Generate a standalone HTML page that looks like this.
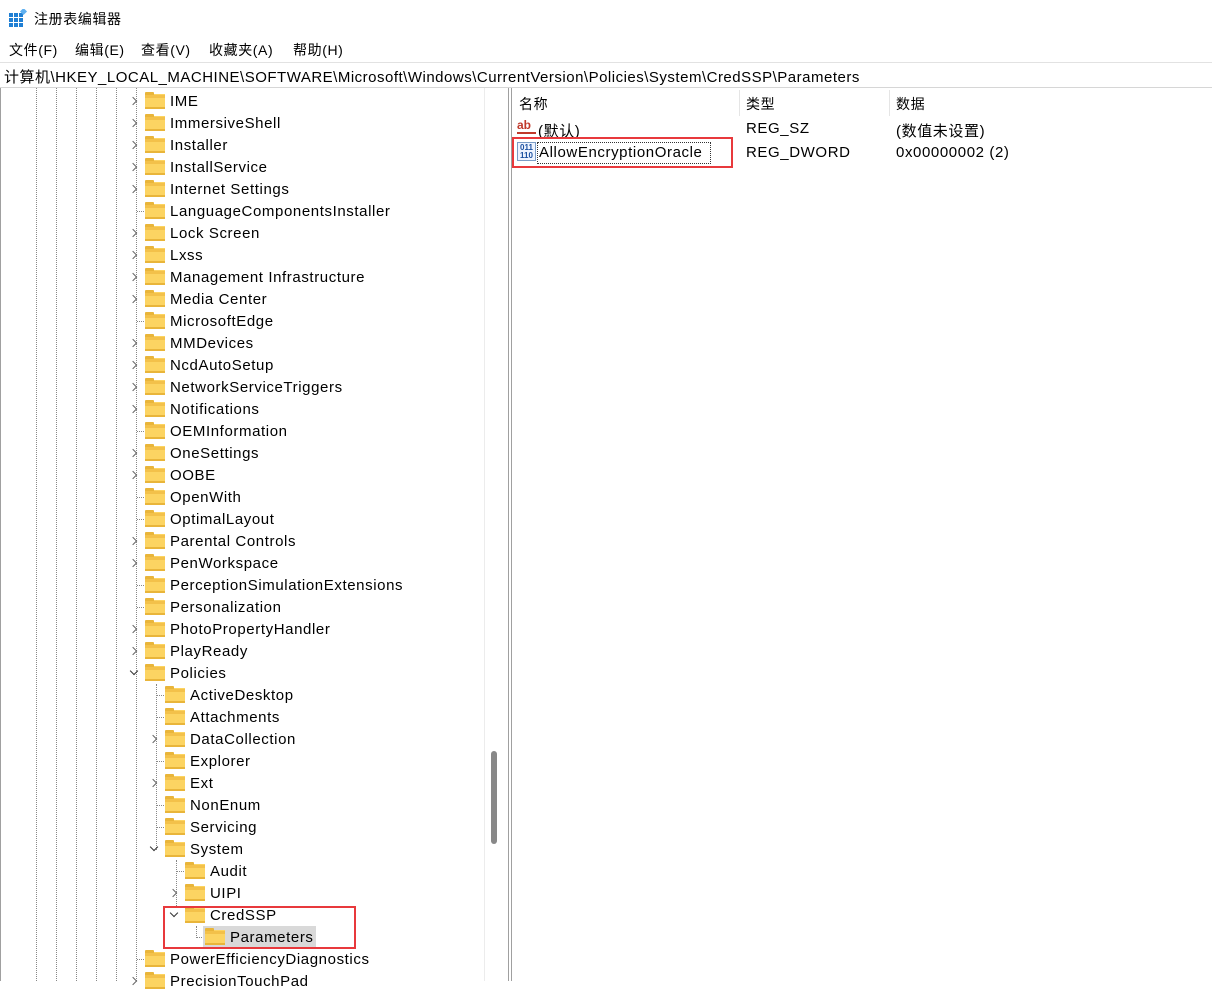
<!DOCTYPE html>
<html><head><meta charset="utf-8"><style>
*{margin:0;padding:0;box-sizing:border-box}
body{width:1212px;height:981px;background:#fff;position:relative;overflow:hidden;font-family:"Liberation Sans","Noto Sans CJK SC",sans-serif;color:#000;font-size:15px;letter-spacing:0.6px}
.a{position:absolute;white-space:nowrap}
.r{position:absolute;height:22px;line-height:22px;white-space:nowrap;font-size:15px}
.f{position:absolute;width:20px;height:15px;top:4px;background:#fcd462;border-bottom:2px solid #e9b53a}
.f:before{content:"";position:absolute;left:0;top:-2px;width:9px;height:3px;background:#e9b53a;border-radius:1px 1px 0 0}
.f:after{content:"";position:absolute;left:0;top:1px;width:20px;height:3px;background:#f3c14a}
.t{position:absolute;top:1px}
.gt{position:absolute;width:6px;height:6px;border-right:1.3px solid #666;border-bottom:1.3px solid #666;top:8px;transform:rotate(-45deg)}
.dn{position:absolute;width:6px;height:6px;border-right:1.3px solid #333;border-bottom:1.3px solid #333;top:6px;transform:rotate(45deg)}
.vl{position:absolute;width:0;border-left:1px dotted #888}
.hl{position:absolute;height:0;border-top:1px dotted #888;top:11px;width:9px}
.red{position:absolute;border:2px solid #e8393c}
</style></head><body>
<svg class="a" style="left:9px;top:9px" width="19" height="19" viewBox="0 0 19 19">
<rect x="0" y="4" width="4" height="4" fill="#1f7fd4"/><rect x="5" y="4" width="4" height="4" fill="#1f7fd4"/><rect x="10" y="4" width="4" height="4" fill="#1f7fd4"/>
<rect x="0" y="9" width="4" height="4" fill="#1f7fd4"/><rect x="5" y="9" width="4" height="4" fill="#1f7fd4"/><rect x="10" y="9" width="4" height="4" fill="#1f7fd4"/>
<rect x="0" y="14" width="4" height="4" fill="#1f7fd4"/><rect x="5" y="14" width="4" height="4" fill="#1f7fd4"/><rect x="10" y="14" width="4" height="4" fill="#1f7fd4"/>
<rect x="12" y="0" width="5" height="5" fill="#5fb0f0" transform="rotate(45 14.5 2.5)"/></svg>
<div class="a" style="left:34px;top:9px;font-size:14px">注册表编辑器</div>
<div class="a" style="left:9px;top:40px;font-size:14px">文件(F)</div>
<div class="a" style="left:75px;top:40px;font-size:14px">编辑(E)</div>
<div class="a" style="left:141px;top:40px;font-size:14px">查看(V)</div>
<div class="a" style="left:209px;top:40px;font-size:14px">收藏夹(A)</div>
<div class="a" style="left:293px;top:40px;font-size:14px">帮助(H)</div>
<div class="a" style="left:0;top:62px;width:1212px;height:1px;background:#e2e2e2"></div>
<div class="a" style="left:4px;top:66px;font-size:15px;letter-spacing:0.5px">计算机\HKEY_LOCAL_MACHINE\SOFTWARE\Microsoft\Windows\CurrentVersion\Policies\System\CredSSP\Parameters</div>
<div class="a" style="left:0;top:87px;width:1212px;height:1px;background:#d6d6d6"></div>
<div class="a" style="left:0;top:88px;width:1px;height:893px;background:#a0a0a0"></div>
<div class="a" style="left:484px;top:88px;width:1px;height:893px;background:#ececec"></div>
<div class="a" style="left:491px;top:751px;width:6px;height:93px;background:#888;border-radius:3px"></div>
<div class="a" style="left:508px;top:88px;width:1px;height:893px;background:#a0a0a0"></div>
<div class="a" style="left:511px;top:88px;width:1px;height:893px;background:#a0a0a0"></div>
<div class="vl" style="left:36px;top:88px;height:893px"></div>
<div class="vl" style="left:56px;top:88px;height:893px"></div>
<div class="vl" style="left:76px;top:88px;height:893px"></div>
<div class="vl" style="left:96px;top:88px;height:893px"></div>
<div class="vl" style="left:116px;top:88px;height:893px"></div>
<div class="vl" style="left:136px;top:88px;height:893px"></div>
<div class="vl" style="left:156px;top:684px;height:166px"></div>
<div class="vl" style="left:176px;top:860px;height:46px"></div>
<div class="vl" style="left:196px;top:926px;height:12px"></div>

<div class="r" style="top:90px;left:0;width:480px"><div class="gt" style="left:130px"></div><div class="f" style="left:145px"></div><span class="t" style="left:170px">IME</span></div>
<div class="r" style="top:112px;left:0;width:480px"><div class="gt" style="left:130px"></div><div class="f" style="left:145px"></div><span class="t" style="left:170px">ImmersiveShell</span></div>
<div class="r" style="top:134px;left:0;width:480px"><div class="gt" style="left:130px"></div><div class="f" style="left:145px"></div><span class="t" style="left:170px">Installer</span></div>
<div class="r" style="top:156px;left:0;width:480px"><div class="gt" style="left:130px"></div><div class="f" style="left:145px"></div><span class="t" style="left:170px">InstallService</span></div>
<div class="r" style="top:178px;left:0;width:480px"><div class="gt" style="left:130px"></div><div class="f" style="left:145px"></div><span class="t" style="left:170px">Internet Settings</span></div>
<div class="r" style="top:200px;left:0;width:480px"><div class="hl" style="left:137px"></div><div class="f" style="left:145px"></div><span class="t" style="left:170px">LanguageComponentsInstaller</span></div>
<div class="r" style="top:222px;left:0;width:480px"><div class="gt" style="left:130px"></div><div class="f" style="left:145px"></div><span class="t" style="left:170px">Lock Screen</span></div>
<div class="r" style="top:244px;left:0;width:480px"><div class="gt" style="left:130px"></div><div class="f" style="left:145px"></div><span class="t" style="left:170px">Lxss</span></div>
<div class="r" style="top:266px;left:0;width:480px"><div class="gt" style="left:130px"></div><div class="f" style="left:145px"></div><span class="t" style="left:170px">Management Infrastructure</span></div>
<div class="r" style="top:288px;left:0;width:480px"><div class="gt" style="left:130px"></div><div class="f" style="left:145px"></div><span class="t" style="left:170px">Media Center</span></div>
<div class="r" style="top:310px;left:0;width:480px"><div class="hl" style="left:137px"></div><div class="f" style="left:145px"></div><span class="t" style="left:170px">MicrosoftEdge</span></div>
<div class="r" style="top:332px;left:0;width:480px"><div class="gt" style="left:130px"></div><div class="f" style="left:145px"></div><span class="t" style="left:170px">MMDevices</span></div>
<div class="r" style="top:354px;left:0;width:480px"><div class="gt" style="left:130px"></div><div class="f" style="left:145px"></div><span class="t" style="left:170px">NcdAutoSetup</span></div>
<div class="r" style="top:376px;left:0;width:480px"><div class="gt" style="left:130px"></div><div class="f" style="left:145px"></div><span class="t" style="left:170px">NetworkServiceTriggers</span></div>
<div class="r" style="top:398px;left:0;width:480px"><div class="gt" style="left:130px"></div><div class="f" style="left:145px"></div><span class="t" style="left:170px">Notifications</span></div>
<div class="r" style="top:420px;left:0;width:480px"><div class="hl" style="left:137px"></div><div class="f" style="left:145px"></div><span class="t" style="left:170px">OEMInformation</span></div>
<div class="r" style="top:442px;left:0;width:480px"><div class="gt" style="left:130px"></div><div class="f" style="left:145px"></div><span class="t" style="left:170px">OneSettings</span></div>
<div class="r" style="top:464px;left:0;width:480px"><div class="gt" style="left:130px"></div><div class="f" style="left:145px"></div><span class="t" style="left:170px">OOBE</span></div>
<div class="r" style="top:486px;left:0;width:480px"><div class="hl" style="left:137px"></div><div class="f" style="left:145px"></div><span class="t" style="left:170px">OpenWith</span></div>
<div class="r" style="top:508px;left:0;width:480px"><div class="hl" style="left:137px"></div><div class="f" style="left:145px"></div><span class="t" style="left:170px">OptimalLayout</span></div>
<div class="r" style="top:530px;left:0;width:480px"><div class="gt" style="left:130px"></div><div class="f" style="left:145px"></div><span class="t" style="left:170px">Parental Controls</span></div>
<div class="r" style="top:552px;left:0;width:480px"><div class="gt" style="left:130px"></div><div class="f" style="left:145px"></div><span class="t" style="left:170px">PenWorkspace</span></div>
<div class="r" style="top:574px;left:0;width:480px"><div class="hl" style="left:137px"></div><div class="f" style="left:145px"></div><span class="t" style="left:170px">PerceptionSimulationExtensions</span></div>
<div class="r" style="top:596px;left:0;width:480px"><div class="hl" style="left:137px"></div><div class="f" style="left:145px"></div><span class="t" style="left:170px">Personalization</span></div>
<div class="r" style="top:618px;left:0;width:480px"><div class="gt" style="left:130px"></div><div class="f" style="left:145px"></div><span class="t" style="left:170px">PhotoPropertyHandler</span></div>
<div class="r" style="top:640px;left:0;width:480px"><div class="gt" style="left:130px"></div><div class="f" style="left:145px"></div><span class="t" style="left:170px">PlayReady</span></div>
<div class="r" style="top:662px;left:0;width:480px"><div class="dn" style="left:131px"></div><div class="f" style="left:145px"></div><span class="t" style="left:170px">Policies</span></div>
<div class="r" style="top:684px;left:0;width:480px"><div class="hl" style="left:157px"></div><div class="f" style="left:165px"></div><span class="t" style="left:190px">ActiveDesktop</span></div>
<div class="r" style="top:706px;left:0;width:480px"><div class="hl" style="left:157px"></div><div class="f" style="left:165px"></div><span class="t" style="left:190px">Attachments</span></div>
<div class="r" style="top:728px;left:0;width:480px"><div class="gt" style="left:150px"></div><div class="f" style="left:165px"></div><span class="t" style="left:190px">DataCollection</span></div>
<div class="r" style="top:750px;left:0;width:480px"><div class="hl" style="left:157px"></div><div class="f" style="left:165px"></div><span class="t" style="left:190px">Explorer</span></div>
<div class="r" style="top:772px;left:0;width:480px"><div class="gt" style="left:150px"></div><div class="f" style="left:165px"></div><span class="t" style="left:190px">Ext</span></div>
<div class="r" style="top:794px;left:0;width:480px"><div class="hl" style="left:157px"></div><div class="f" style="left:165px"></div><span class="t" style="left:190px">NonEnum</span></div>
<div class="r" style="top:816px;left:0;width:480px"><div class="hl" style="left:157px"></div><div class="f" style="left:165px"></div><span class="t" style="left:190px">Servicing</span></div>
<div class="r" style="top:838px;left:0;width:480px"><div class="dn" style="left:151px"></div><div class="f" style="left:165px"></div><span class="t" style="left:190px">System</span></div>
<div class="r" style="top:860px;left:0;width:480px"><div class="hl" style="left:177px"></div><div class="f" style="left:185px"></div><span class="t" style="left:210px">Audit</span></div>
<div class="r" style="top:882px;left:0;width:480px"><div class="gt" style="left:170px"></div><div class="f" style="left:185px"></div><span class="t" style="left:210px">UIPI</span></div>
<div class="r" style="top:904px;left:0;width:480px"><div class="dn" style="left:171px"></div><div class="f" style="left:185px"></div><span class="t" style="left:210px">CredSSP</span></div>
<div class="r" style="top:926px;left:0;width:480px"><div class="hl" style="left:197px"></div><div class="a" style="left:203px;top:0;width:113px;height:22px;background:#d9d9d9"></div><div class="f" style="left:205px"></div><span class="t" style="left:230px">Parameters</span></div>
<div class="r" style="top:948px;left:0;width:480px"><div class="hl" style="left:137px"></div><div class="f" style="left:145px"></div><span class="t" style="left:170px">PowerEfficiencyDiagnostics</span></div>
<div class="r" style="top:970px;left:0;width:480px"><div class="gt" style="left:130px"></div><div class="f" style="left:145px"></div><span class="t" style="left:170px">PrecisionTouchPad</span></div>
<div class="red" style="left:163px;top:906px;width:193px;height:43px"></div>
<div class="a" style="left:519px;top:94px;font-size:14px">名称</div>
<div class="a" style="left:746px;top:94px;font-size:14px">类型</div>
<div class="a" style="left:896px;top:94px;font-size:14px">数据</div>
<div class="a" style="left:739px;top:90px;width:1px;height:26px;background:#e5e5e5"></div>
<div class="a" style="left:889px;top:90px;width:1px;height:26px;background:#e5e5e5"></div>
<div class="a" style="left:517px;top:118px;width:19px;height:16px;color:#c0392b;font-weight:bold;font-size:12px;line-height:14px;letter-spacing:0;border-bottom:2px solid #c0392b">ab</div>
<div class="a" style="left:538px;top:120px;font-size:15px">(默认)</div>
<div class="a" style="left:746px;top:120px;font-size:15px">REG_SZ</div>
<div class="a" style="left:896px;top:120px;font-size:15px">(数值未设置)</div>
<div class="a" style="left:517px;top:142px;width:19px;height:19px;border:1px solid #7a9cc6;background:#eef4ff;font-size:8px;line-height:8px;letter-spacing:0;color:#1a4fa0;font-weight:bold;text-align:center;padding-top:1px">011<br>110</div>
<div class="a" style="left:537px;top:142px;width:174px;height:22px;border:1px dotted #333"></div>
<div class="a" style="left:539px;top:144px;font-size:15px">AllowEncryptionOracle</div>
<div class="a" style="left:746px;top:144px;font-size:15px">REG_DWORD</div>
<div class="a" style="left:896px;top:144px;font-size:15px">0x00000002 (2)</div>
<div class="red" style="left:512px;top:137px;width:221px;height:31px"></div>
</body></html>
